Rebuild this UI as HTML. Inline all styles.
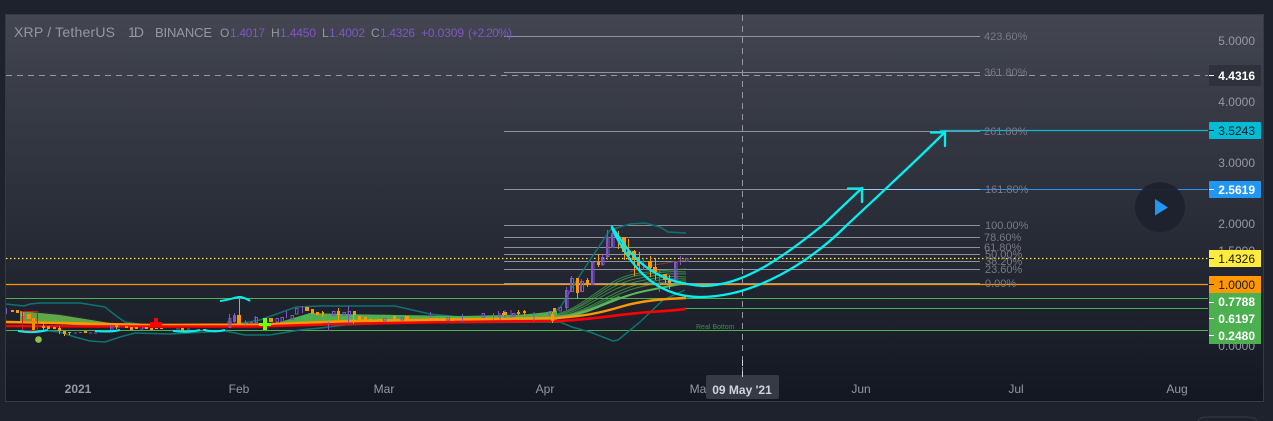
<!DOCTYPE html>
<html><head><meta charset="utf-8"><style>
html,body{margin:0;padding:0;background:#1e222d;width:1273px;height:421px;overflow:hidden}
svg{display:block}
text{font-family:"Liberation Sans",sans-serif}
</style></head><body>
<svg width="1273" height="421" viewBox="0 0 1273 421" xmlns="http://www.w3.org/2000/svg">
<defs>
<linearGradient id="bg" x1="0" y1="0" x2="0" y2="1"><stop offset="0" stop-color="#434651"/><stop offset="1" stop-color="#131722"/></linearGradient>
<clipPath id="pane"><rect x="6" y="15" width="1257" height="386"/></clipPath>
</defs>
<rect width="1273" height="421" fill="#1e222d"/>
<rect x="5.5" y="14.5" width="1258" height="387" fill="url(#bg)" stroke="#363a45"/>
<g clip-path="url(#pane)">
<!-- fib lines -->
<g stroke="#9598a1" stroke-width="1" fill="none" opacity=".95">
<path d="M504 36.500H980M504 72.500H980M504 131.500H980M504 189.500H980M504 225.500H980M504 237.500H980M504 247.500H980M504 254.500H980M504 261.500H980M504 269.500H980M504 283.500H980"/>
</g>
<path d="M862 189.500H980" stroke="#90caf9"/>
<!-- horizontals -->
<path d="M6 75.500H1208" stroke="#9598a1" stroke-dasharray="6 5"/>
<path d="M742.500 15V375" stroke="#9598a1" stroke-dasharray="6 5"/>
<path d="M940 130.500H1208" stroke="#00bcd4" stroke-width="1.300"/>
<path d="M980 189.500H1208" stroke="#2196f3"/>
<path d="M6 258.500H1208" stroke="#ffeb3b" stroke-dasharray="1.500 2.500" stroke-width="1.200"/>
<path d="M6 298.500H1208M686 308.500H1208M6 330.500H1208" stroke="#4caf50" stroke-width="1"/>
<path d="M6 284.500H1208" stroke="#ff9800" stroke-width="1.300"/>
<!-- bollinger -->
<g fill="none" stroke="#0d7371" stroke-width="1.500">
<path d="M6 304L24 306L30 304L40 303L80 303L105 307L115 315L125 322L150 326L225 326L260 320L296 307L320 306L395 306L430 314L460 317L550 314L560 308L575 283L590 260L610 230L630 224L645 223L660 227L668 232L686 233"/>
<path d="M48 331L60 332L75 337L90 341L105 342L120 337L135 333L170 334L225 331L235 333L245 335L270 335L300 330L320 328L345 325L400 323L560 322L572 327L590 332L613 341L618 340L640 322L663 300L685 290"/>
</g>
<!-- ribbons -->
<path d="M20 311L60 315L110 323L110 327L20 322Z" fill="#5fa84a"/>
<path d="M20 309L110 322L60 314Z" fill="#8c3a3a" opacity=".35"/>
<path d="M280 322L310 313L340 314L400 315L460 316L520 315L557 311L557 321L460 322L340 323L280 326Z" fill="#4caf50"/>
<g fill="none" stroke="#4caf50" stroke-width="1" opacity=".7">
<path d="M557 314C590 305 605 277 640 273S675 270 686 269"/>
<path d="M557 315C590 307 605 280 640 275S675 272 686 272"/>
<path d="M557 315C590 308 605 284 640 278S675 274 686 274"/>
<path d="M557 316C590 310 605 288 640 281S675 277 686 277"/>
<path d="M557 317C590 312 610 291 640 284S675 279 686 279"/>
<path d="M557 317C590 313 610 294 640 287S675 281 686 281"/>
</g>
<path d="M557 318C590 314 615 297 645 291S675 285 686 283" fill="none" stroke="#5cb85c" stroke-width="2"/>
<path d="M557 317C585 315 600 305 620 297" fill="none" stroke="#5cb85c" stroke-width="3" opacity=".75"/>
<path d="M630 272C650 264 670 263 686 260" fill="none" stroke="#7a3a3a" stroke-width="1"/>
<!-- MAs -->
<path d="M6 322L60 323L150 325L260 324.500L350 321L450 319.500L557 318C585 316 600 313 620 307S660 299 686 298" fill="none" stroke="#ff9800" stroke-width="2.400"/>
<path d="M6 326L100 326.500L260 326.500L340 324L450 322L557 321C590 320 620 314 650 312S675 310 686 309" fill="none" stroke="#f00" stroke-width="2.600"/>
<!-- candles purple -->
<g fill="none" stroke="#7e57c2" stroke-width="1">
<path d="M6.500 308V314M229.500 314V328M234.500 313V323M245.500 320V326M255.500 316V323M286.500 311V318M302.500 306V313M348.500 306V323M493.500 313V320M498.500 311V317M566.500 287V310M571.500 276V292M581.500 279V292M592.500 261V285M602.500 255V266M607.500 230V260M612.500 226V247M643.500 258V270M659.500 270V292M675.500 261V283M680.500 256V265M110.500 325V331M328.500 322V331M462.500 314V322M430.500 312V319M500 313V320M505 310V318M511 310V318M534 312V321"/>
<path d="M74 333H77M79 332.500H82M89 333H92M94 333H97M107 331H110M115 327H120M140 329H143M176 329H180M187 329H190M197 330H200M142 328H146M227 322H232M245 323H248M250 322.500H253M265 321H268"/>
<rect x="565.500" y="290.500" width="2.500" height="17"/><rect x="570.500" y="278.500" width="3" height="13"/><rect x="580.500" y="281.500" width="3" height="10"/><rect x="591.500" y="262.500" width="2.500" height="22"/><rect x="601.500" y="257.500" width="2.500" height="7"/><rect x="606.500" y="237.500" width="2.500" height="19"/><rect x="611.500" y="233.500" width="2.500" height="14"/><rect x="674.500" y="262.500" width="2.500" height="20"/><rect x="685.500" y="258.500" width="2.500" height="3"/>
<rect x="229" y="318.500" width="2" height="9"/><rect x="233.500" y="315.500" width="2" height="6"/><rect x="255" y="317.500" width="2.500" height="5"/><rect x="276" y="318.500" width="2.500" height="3.500"/><rect x="281" y="317.500" width="2.500" height="4"/><rect x="291" y="315.500" width="2.500" height="4"/><rect x="295.500" y="308.500" width="2.500" height="5.500"/><rect x="332.500" y="311.500" width="2.500" height="4"/><rect x="343" y="312.500" width="2.500" height="3"/><rect x="348" y="311.500" width="2.500" height="3"/><rect x="383.500" y="318.500" width="2.500" height="2.500"/><rect x="401" y="317.500" width="2.500" height="2.500"/><rect x="447" y="317.500" width="2.500" height="2.500"/><rect x="482" y="313.500" width="2.500" height="4"/><rect x="512.500" y="313.500" width="2.500" height="3"/><rect x="549" y="311.500" width="2.500" height="3.500"/><rect x="559" y="307.500" width="2.500" height="3.500"/><rect x="111" y="326.500" width="2" height="4"/>
</g>
<!-- candles orange -->
<g fill="#ff9800" stroke="none">
<path d="M576 278h3v15h-3zM577 293h1v6h-1zM586 280h3v4h-3zM587 278h1v9h-1zM597 262h3v3h-3zM598 254h1v13h-1zM618 231h1v18h-1zM622 237h4v15h-4zM624 237h1v23h-1zM628 239h1v21h-1zM627 251h3v5h-3zM632 251h4v9h-4zM634 250h1v26h-1zM637 257h3v9h-3zM639 252h1v18h-1zM648 261h4v7h-4zM650 256h1v21h-1zM653 267h4v5h-4zM655 258h1v22h-1zM663 274h4v6h-4zM665 274h1v10h-1zM668 280h3v3h-3zM669 275h1v14h-1z"/>
<path d="M27 314h4v5h-4zM32 318h3v12h-3zM42 326h3v2h-3zM43 323h1v9h-1zM47 326h3v3h-3zM53 327h3v2h-3zM58 328h3v3h-3zM59 326h1v8h-1zM63 331h3v3h-3zM64 331h1v5h-1zM68 332h3v1h-3zM69 332h1v3h-1zM84 331h3v2h-3zM11 310h3v2h-3zM16 310h3v3h-3zM21 312h3v4h-3z"/>
<path d="M115 325h3v2h-3zM116 323h1v6h-1zM125 326h3v2h-3zM130 327h3v3h-3zM135 327h3v2h-3zM145 327h3v2h-3zM150 328h3v2h-3zM155 328h3v1h-3zM160 328h3v1h-3zM181 328h3v3h-3zM203 329h3v1h-3z"/>
<path d="M237 315h4v9h-4zM239 299h1v25h-1zM269 318h4v4h-4zM305 307h4v4h-4zM311 309h3v5h-3zM316 312h3v3h-3zM322 312h2v3h-2zM337 311h3v4h-3zM353 311h3v4h-3zM358 316h3v4h-3zM364 317h3v4h-3zM369 319h3v2h-3zM378 319h3v2h-3zM389 320h3v1h-3zM393 316h3v3h-3zM405 316h4v3h-4zM430 318h3v2h-3zM435 318h3v2h-3zM441 318h3v3h-3zM451 318h3v3h-3zM458 319h3v1h-3zM472 318h3v2h-3zM502 313h3v2h-3zM503 311h1v5h-1zM517 312h3v2h-3zM518 310h1v5h-1zM523 311h3v2h-3zM524 310h1v5h-1zM553 308h3v4h-3z"/>
<path d="M338 308h1v14h-1zM353 312h1v12h-1zM504 312h3v3h-3zM551 314h3v7h-3zM552 312h1v11h-1zM322 311h1v6h-1z"/>
</g>
<!-- markers -->
<rect x="22.500" y="311.500" width="15" height="19" fill="#f00" fill-opacity=".08" stroke="#e01010"/>
<path d="M154 318h4v4h4v5h-12v-5h4z" fill="#f00"/>
<path d="M263 318h4v5h4v3h-4v4h-4v-4h-4v-3h4z" fill="#76ff03"/>
<circle cx="38.500" cy="339.500" r="3.300" fill="#8bc34a"/>
<g fill="none" stroke="#00f0f0" stroke-width="2">
<path d="M220 301C230 300 238 296 241 297S248 299 250 301"/>
<path d="M18 331C30 333 40 332 48 330M95 331C105 332 112 332 120 330M173 331C182 332 192 332 200 330M204 330C212 332 218 332 225 330"/>
</g>
<!-- big cyan arcs -->
<g fill="none" stroke="#00f0f0" stroke-width="2.300" stroke-linecap="round">
<path d="M612 227C628 250 645 282 703 286C745 286 785 255 823 225L862 188"/>
<path d="M612 228C628 262 652 297 700 297C755 297 810 262 847 225C880 194 915 162 945 132"/>
<path d="M848 188.500H862V202M931 132.500H945V146"/>
</g>
<text x="696" y="329" font-size="7" fill="#3f8a45">Real Bottom</text>
<!-- fib labels -->
<g font-size="11" fill="#787b86">
<text x="984" y="40">423.60%</text><text x="984" y="76">361.80%</text><text x="984" y="135">261.80%</text><text x="985" y="193">161.80%</text><text x="985" y="229">100.00%</text><text x="984" y="241">78.60%</text><text x="984" y="251">61.80%</text><text x="985" y="258">50.00%</text><text x="985" y="265">38.20%</text><text x="985" y="273">23.60%</text><text x="985" y="287">0.00%</text>
</g>
<!-- header -->
<g font-size="14" fill="#9598a1">
<text x="14" y="37" textLength="101">XRP / TetherUS</text><text x="128" y="37" textLength="16">1D</text><text x="155" y="37" font-size="13" textLength="57">BINANCE</text>
</g>
<g font-size="12" fill="#9598a1"><text x="220" y="37">O</text><text x="271" y="37">H</text><text x="322" y="37">L</text><text x="371" y="37">C</text></g>
<g font-size="12" fill="#7e57c2"><text x="230" y="37" textLength="35">1.4017</text><text x="280" y="37" textLength="36">1.4450</text><text x="329" y="37" textLength="36">1.4002</text><text x="380" y="37" textLength="35">1.4326</text><text x="421" y="37" textLength="43">+0.0309</text><text x="468" y="37" textLength="44">(+2.20%)</text></g>
<!-- time labels -->
<g font-size="12" fill="#9598a1" text-anchor="middle">
<text x="78" y="393" font-weight="bold" font-size="12">2021</text><text x="239" y="393">Feb</text><text x="384" y="393">Mar</text><text x="545" y="393">Apr</text><text x="701" y="393">May</text><text x="861" y="393">Jun</text><text x="1016" y="393">Jul</text><text x="1177" y="393">Aug</text>
</g>
<rect x="706" y="375" width="73" height="24" rx="2" fill="#363a45"/>
<text x="742" y="394" font-size="12" font-weight="bold" fill="#d1d4dc" text-anchor="middle">09 May '21</text>
<path d="M742.500 360V380" stroke="#d1d4dc" stroke-dasharray="6 5"/>
<!-- play -->
<circle cx="1160" cy="207" r="25" fill="#1e222d" fill-opacity=".95"/>
<path d="M1155 199L1168 207.500L1155 215.500Z" fill="#2196f3"/>
<!-- axis -->
<g font-size="12" fill="#9598a1" text-anchor="end">
<text x="1255" y="45">5.0000</text><text x="1255" y="106">4.0000</text><text x="1255" y="167">3.0000</text><text x="1255" y="228">2.0000</text><text x="1255" y="255">1.5000</text><text x="1255" y="350">0.0000</text>
</g>
<rect x="1209" y="65" width="52" height="21" fill="#2f323d"/>
<rect x="1209" y="122" width="52" height="17" rx="1" fill="#00bcd4"/>
<rect x="1209" y="181" width="52" height="17" rx="1" fill="#2196f3"/>
<rect x="1209" y="250" width="52" height="17" fill="#ffeb3b"/>
<rect x="1209" y="276" width="52" height="17" fill="#ff9800"/>
<rect x="1209" y="293" width="52" height="51" fill="#4caf50"/>
<path d="M1209 75.500H1214M1209 189.500H1214M1209 302.500H1214M1209 318.500H1214M1209 335.500H1214" stroke="#fff"/>
<path d="M1209 130.500H1214M1209 258.500H1214M1209 284.500H1214" stroke="#131722"/>
<g font-size="12" text-anchor="end">
<text x="1255" y="80" fill="#fff" font-weight="bold">4.4316</text>
<text x="1255" y="135" fill="#131722">3.5243</text>
<text x="1255" y="194" fill="#fff" font-weight="bold">2.5619</text>
<text x="1255" y="263" fill="#131722">1.4326</text>
<text x="1255" y="289" fill="#131722">1.0000</text>
<text x="1255" y="306" fill="#fff" font-weight="bold">0.7788</text>
<text x="1255" y="323" fill="#fff" font-weight="bold">0.6197</text>
<text x="1255" y="340" fill="#fff" font-weight="bold">0.2480</text>
</g>
</g>
<path d="M1198 421C1200 417 1204 417 1210 417H1245C1251 417 1255 417 1257 421" fill="none" stroke="#363a45"/>
</svg>
</body></html>
